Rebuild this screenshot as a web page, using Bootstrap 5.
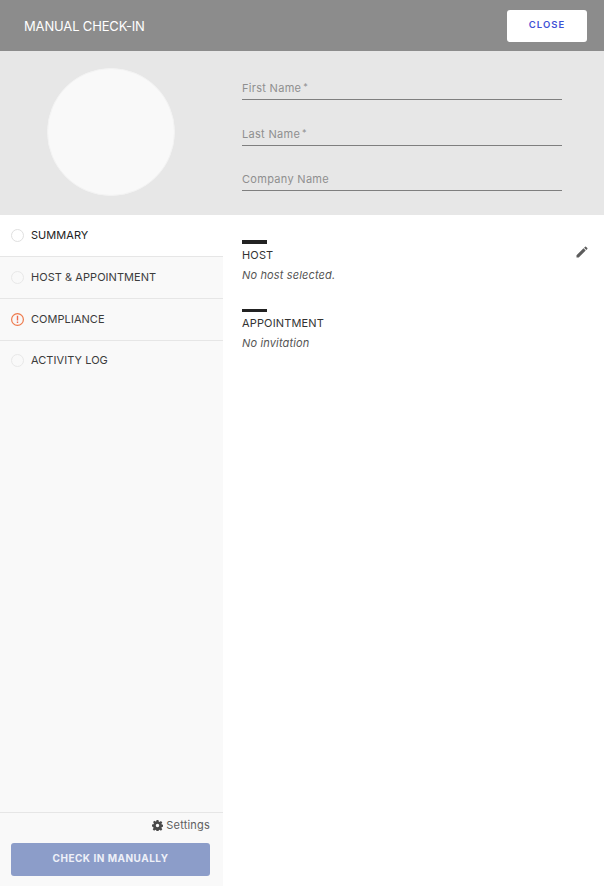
<!DOCTYPE html>
<html lang="en">
<head>
<meta charset="utf-8">
<title>Manual check-in</title>
<link rel="stylesheet" href="https://cdn.jsdelivr.net/npm/bootstrap@5.3.0/dist/css/bootstrap.min.css">
<style>
html,body{height:100%;}
body{font-family:Inter,"Liberation Sans",sans-serif;background:#fff;color:#222;overflow:hidden;}
.page-shell{width:604px;height:886px;}
.top-head{height:51px;background:#8c8c8c;padding:10px 17px 9px 24px;}
.top-title{color:#fff;font-size:13px;line-height:16px;font-weight:400;letter-spacing:-.15px;margin-top:-1px;}
.close-btn{width:80px;height:32px;background:#fff;border:0;border-radius:3px;color:#3f51d5;font-size:9.5px;font-weight:600;letter-spacing:1px;padding:0 0 2px;}
.id-panel{height:164px;background:#e7e7e7;}
.avatar-col{width:222px;padding-top:17px;padding-left:47px;}
.avatar-disc{width:128px;height:128px;border-radius:50%;background:#f9f9f9;border:1px solid #f3f3f3;}
.fields-col{width:320px;margin-left:20px;padding-top:28px;}
.name-field{height:21px;border-bottom:1px solid #7f7f7f;color:#8f8f8f;font-size:11px;line-height:15px;letter-spacing:.3px;margin-bottom:25px;}
.name-field:last-child{margin-bottom:0;}
.name-field.third{margin-top:-1px;padding-top:2px;}
.req-mark{font-size:9px;vertical-align:2px;margin-left:2px;}
.main-row{height:671px;}
.side-col{width:223px;background:#f9f9f9;}
.step-item{height:42px;border-bottom:1px solid #e6e6e6;padding:1px 0 1px 11px;font-size:11px;letter-spacing:.05px;color:#3c3c3c;gap:7px;}
.step-item.on{background:#fff;color:#222;height:42px;}
.step-item.plain{border-bottom:0;height:40px;padding-top:0;padding-bottom:2px;}
.step-dot{width:13px;height:13px;border-radius:50%;border:1px solid #e8e8e8;flex:none;}
.step-item.on .step-dot{border-color:#e0e0e0;}
.side-foot{border-top:1px solid #e6e6e6;padding:4px 13px 10px 11px;}
.settings-link{font-size:11px;color:#5f5f5f;line-height:17px;margin-bottom:9px;gap:3px;letter-spacing:.2px;}
.checkin-btn{width:199px;height:33px;background:#8c9dc9;border:0;border-radius:3px;color:#eef0f8;font-size:10px;font-weight:700;letter-spacing:.5px;padding:0 0 2px;}
.detail-col{padding:25px 16px 0 19px;}
.rule-bar{width:25px;height:4px;background:#222;}
.sect-name{font-size:11px;line-height:14px;color:#333;margin-top:4px;letter-spacing:.15px;}
.sect-note{font-size:11px;line-height:14px;font-style:italic;color:#555;margin-top:6px;letter-spacing:.15px;}
.sect-block{margin-bottom:27px;}
.sect-block + .sect-block .rule-bar{height:3px;}
.edit-icon{margin-top:6px;}
</style>
</head>
<body>
<div class="page-shell d-flex flex-column">
  <header class="top-head d-flex justify-content-between align-items-center">
    <span class="top-title">MANUAL CHECK-IN</span>
    <button type="button" class="btn close-btn">CLOSE</button>
  </header>
  <section class="id-panel d-flex">
    <div class="avatar-col"><div class="avatar-disc"></div></div>
    <div class="fields-col">
      <div class="name-field">First Name<span class="req-mark">*</span></div>
      <div class="name-field">Last Name<span class="req-mark">*</span></div>
      <div class="name-field third">Company Name</div>
    </div>
  </section>
  <div class="main-row d-flex">
    <aside class="side-col d-flex flex-column">
      <div class="flex-grow-1">
        <div class="step-item on d-flex align-items-center"><span class="step-dot"></span>SUMMARY</div>
        <div class="step-item d-flex align-items-center"><span class="step-dot"></span>HOST &amp; APPOINTMENT</div>
        <div class="step-item d-flex align-items-center">
          <svg width="13" height="13" viewBox="0 0 13 13"><circle cx="6.500" cy="6.500" r="5.900" fill="none" stroke="#ee7a4c" stroke-width="1.200"/><rect x="5.800" y="2.700" width="1.400" height="4.800" fill="#ee6a50"/><rect x="5.800" y="8.500" width="1.400" height="1.500" fill="#ee6a50"/></svg>
          COMPLIANCE</div>
        <div class="step-item plain d-flex align-items-center"><span class="step-dot"></span>ACTIVITY LOG</div>
      </div>
      <div class="side-foot">
        <div class="settings-link d-flex justify-content-end align-items-center">
          <svg width="11" height="11" viewBox="0 0 16 16"><path fill="#4a4a4a" fill-rule="evenodd" d="M6.600 0h2.800l.4 2.200 1.300.6 1.900-1.300 2 2-1.300 1.900.6 1.300 2.200.4v2.800l-2.200.4-.6 1.300 1.300 1.900-2 2-1.900-1.300-1.300.6-.4 2.200H6.600l-.4-2.200-1.300-.6-1.900 1.300-2-2 1.300-1.900-.6-1.300L0 9.400V6.600l2.200-.4.6-1.300L1.500 3l2-2 1.400 1.300 1.300-.6zM8 5.500a2.500 2.500 0 1 0 0 5 2.500 2.500 0 0 0 0-5z"/></svg>
          Settings</div>
        <button type="button" class="btn checkin-btn d-block">CHECK IN MANUALLY</button>
      </div>
    </aside>
    <main class="detail-col flex-grow-1 d-flex justify-content-between">
      <div>
        <div class="sect-block">
          <div class="rule-bar"></div>
          <div class="sect-name">HOST</div>
          <div class="sect-note">No host selected.</div>
        </div>
        <div class="sect-block">
          <div class="rule-bar"></div>
          <div class="sect-name">APPOINTMENT</div>
          <div class="sect-note">No invitation</div>
        </div>
      </div>
      <svg class="edit-icon" width="12" height="12" viewBox="0 0 12 12"><path fill="#5c5c5c" d="M.5 9.300V11.500h2.200l7-7-2.200-2.200zM11.300 2.900a.6.600 0 0 0 0-.85L9.950.7a.6.600 0 0 0-.85 0L8.100 1.700l2.200 2.200z"/></svg>
    </main>
  </div>
</div>
<script src="https://cdn.jsdelivr.net/npm/bootstrap@5.3.0/dist/js/bootstrap.bundle.min.js"></script>
</body>
</html>
